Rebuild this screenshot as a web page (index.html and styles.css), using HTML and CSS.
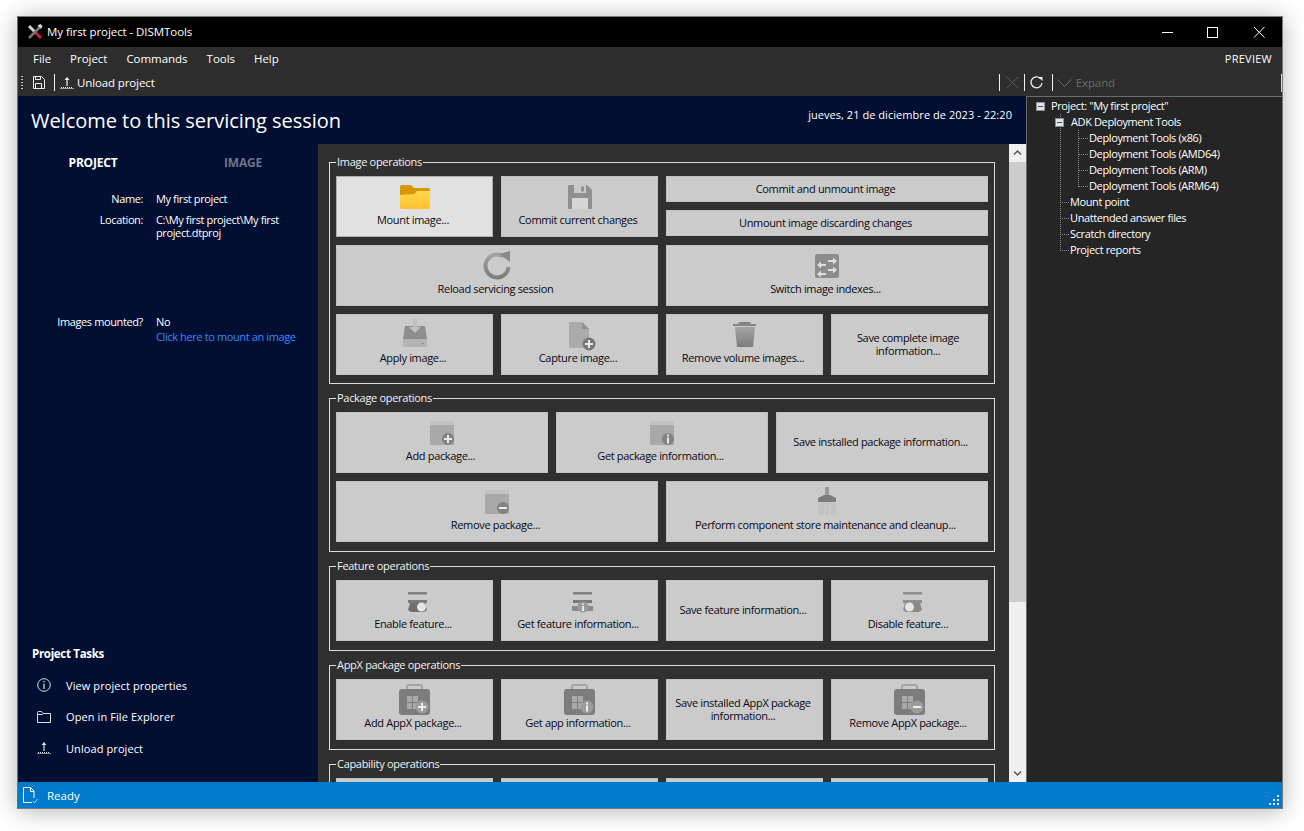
FILE: index.html
```html
<!DOCTYPE html>
<html>

<head>
  <meta charset="utf-8" />
  <title>My first project - DISMTools</title>
  <link rel="stylesheet" href="styles.css">
</head>

<body>
  <svg class="defs" width="0" height="0">
    <defs>
      <linearGradient id="g-down" x1="0" y1="0" x2="0" y2="1">
        <stop offset="0" stop-color="#a3a3a3" />
        <stop offset="1" stop-color="#7c7c7c" />
      </linearGradient>
      <linearGradient id="g-folder" x1="0" y1="0" x2="0" y2="1">
        <stop offset="0" stop-color="#ffd84d" />
        <stop offset="1" stop-color="#fdc02f" />
      </linearGradient>
    </defs>
    <symbol id="i-folder" viewBox="0 0 32 32">
      <path d="M1 6a2 2 0 0 1 2-2h9l3 3h14a2 2 0 0 1 2 2v6H1z" fill="#d79700" />
      <path d="M1 14l14-1 3-3h13v16a2 2 0 0 1-2 2H3a2 2 0 0 1-2-2z" fill="url(#g-folder)" />
    </symbol>
    <symbol id="i-save" viewBox="0 0 32 32">
      <path d="M4 5a1 1 0 0 1 1-1h18l5 5v18a1 1 0 0 1-1 1H5a1 1 0 0 1-1-1z" fill="#8f8f8f" />
      <rect x="10" y="4" width="12" height="8" fill="#c9c9c9" />
      <rect x="17" y="5.5" width="3" height="5" fill="#8f8f8f" />
      <rect x="8" y="17" width="16" height="11" fill="#d6d6d6" />
    </symbol>
    <symbol id="i-reload" viewBox="0 0 32 32">
      <path d="M22.5 6.5A11.5 11.5 0 1 0 27.5 17" fill="none" stroke="url(#g-down)" stroke-width="4" />
      <path d="M18 4l11-3v11z" fill="#8a8a8a" />
    </symbol>
    <symbol id="i-switch" viewBox="0 0 32 32">
      <rect x="4" y="4" width="24" height="24" rx="2" fill="#8c8c8c" />
      <path d="M17 10h5V7.5l4 3.5-4 3.5V12h-5zM15 14h-5v-2.5L6 15l4 3.5V16h5zM17 19h5v-2.5l4 3.5-4 3.5V21h-5zM15 23h-5v-2.5L6 24l4 3.5V25h5z" fill="#dedede" />
    </symbol>
    <symbol id="i-apply" viewBox="0 0 32 32">
      <path d="M6 7h20l2 13H4z" fill="#8e8e8e" />
      <path d="M14 0h4v8h4l-6 6-6-6h4z" fill="#c0c0c0" />
      <rect x="4" y="20" width="24" height="8" rx="1" fill="#b4b4b4" />
      <rect x="23" y="24" width="2" height="1" fill="#8a8a8a" />
    </symbol>
    <symbol id="i-capture" viewBox="0 0 32 32">
      <path d="M5 4a1 1 0 0 1 1-1h12l7 7v19H6a1 1 0 0 1-1-1z" fill="#ababab" />
      <path d="M18 3l7 7h-7z" fill="#8f8f8f" />
      <circle cx="25" cy="25" r="6.5" fill="#787878" />
      <path d="M24 21h2v3h3v2h-3v3h-2v-3h-3v-2h3z" fill="#e8e8e8" />
    </symbol>
    <symbol id="i-trash" viewBox="0 0 32 32">
      <path d="M10 3h11l1 2h5v2H4V5h5z" fill="#858585" />
      <path d="M6 8h20l-2 20H8z" fill="url(#g-down)" />
    </symbol>
    <symbol id="i-pkg-add" viewBox="0 0 32 32">
      <rect x="4" y="4" width="24" height="4" fill="#c3c3c3" />
      <rect x="4" y="8" width="24" height="20" fill="#a9a9a9" />
      <circle cx="22" cy="22" r="6" fill="#828282" />
      <path d="M21 18h2v3h3v2h-3v3h-2v-3h-3v-2h3z" fill="#e8e8e8" />
    </symbol>
    <symbol id="i-pkg-info" viewBox="0 0 32 32">
      <rect x="4" y="4" width="24" height="4" fill="#c3c3c3" />
      <rect x="4" y="8" width="24" height="20" fill="#a9a9a9" />
      <circle cx="22" cy="22" r="6" fill="#828282" />
      <path d="M21 17.5h2v2h-2zM21 20.5h2v6h-2z" fill="#e8e8e8" />
    </symbol>
    <symbol id="i-pkg-remove" viewBox="0 0 32 32">
      <rect x="4" y="4" width="24" height="4" fill="#c3c3c3" />
      <rect x="4" y="8" width="24" height="20" fill="#a9a9a9" />
      <circle cx="22" cy="22" r="6" fill="#828282" />
      <rect x="18" y="21" width="8" height="2" fill="#e8e8e8" />
    </symbol>
    <symbol id="i-brush" viewBox="0 0 32 32">
      <rect x="14" y="1" width="4" height="10" fill="#999" />
      <path d="M13 9h6l6 3v4H7v-4z" fill="#7c7c7c" />
      <path d="M7 17h7l-1 12H7zM15 17h3v12h-3zM19 17h6v12h-5z" fill="#c2c2c2" />
    </symbol>
    <symbol id="i-feat-on" viewBox="0 0 32 32">
      <rect x="9" y="7" width="19" height="2.5" fill="#808080" />
      <rect x="9" y="15" width="19" height="3" fill="#7a7a7a" />
      <path d="M11 18h15l2 7-3 2H12l-3-2z" fill="#6f6f6f" />
      <circle cx="22.5" cy="22" r="4.5" fill="#e6e6e6" />
    </symbol>
    <symbol id="i-feat-info" viewBox="0 0 32 32">
      <rect x="9" y="7" width="19" height="2.5" fill="#808080" />
      <rect x="9" y="15" width="19" height="3" fill="#7a7a7a" />
      <path d="M8 21h21v5H8z" fill="#8a8a8a" />
      <circle cx="19" cy="22" r="5.5" fill="#9a9a9a" />
      <path d="M18 18.5h2v1.500h-2zM18 21h2v5h-2z" fill="#e8e8e8" />
    </symbol>
    <symbol id="i-feat-off" viewBox="0 0 32 32">
      <rect x="9" y="7" width="19" height="2.5" fill="#8e8e8e" />
      <rect x="9" y="15" width="19" height="3" fill="#8e8e8e" />
      <path d="M11 18h15l2 7-3 2H12l-3-2z" fill="#8a8a8a" />
      <circle cx="15.5" cy="22" r="4.5" fill="#e6e6e6" />
    </symbol>
    <symbol id="i-bag" viewBox="0 0 32 32">
      <path d="M8 6V3a2 2 0 0 1 2-2h11a2 2 0 0 1 2 2v3" fill="none" stroke="#a3a3a3" stroke-width="2" />
      <rect x="0" y="5" width="31" height="26" rx="3" fill="#7d7d7d" />
      <path d="M8 12h5v6H8zM14 12h5v6h-5zM8 19h5v6H8zM14 19h5v6h-5z" fill="#a9a9a9" />
    </symbol>
    <symbol id="i-unload" viewBox="0 0 14 14">
      <path d="M7 1l2.500 3H7.600v6H6.400V4H4.500z" fill="currentColor" />
      <path d="M1 11.500h12" stroke="currentColor" stroke-dasharray="1 1" fill="none" />
      <path d="M0 12.500h14" stroke="currentColor" fill="none" opacity=".6" />
    </symbol>
  </svg>

  <div class="window">
    <div class="titlebar">
      <svg class="app-icon" width="16" height="16" viewBox="0 0 16 16">
        <path d="M2 2l5.500 5.500" stroke="#d0d0d0" stroke-width="3" />
        <path d="M8 8l6 6" stroke="#c8203c" stroke-width="3" />
        <path d="M14 2L2 14" stroke="#777" stroke-width="2.500" />
        <path d="M10.500 1.500l3-1.500 2 2-1.500 3z" fill="#d8d8d8" />
      </svg>
      <span class="title-text">My first project - DISMTools</span>
      <div class="winbtns">
        <svg class="winbtn" width="46" height="30" viewBox="0 0 46 30"><path d="M18 15.500h11" stroke="#fff" /></svg>
        <svg class="winbtn" width="46" height="30" viewBox="0 0 46 30"><rect x="17.500" y="10.500" width="10" height="10" fill="none" stroke="#fff" /></svg>
        <svg class="winbtn" width="46" height="30" viewBox="0 0 46 30"><path d="M18 10l10.500 10.500M28.500 10L18 20.500" stroke="#fff" /></svg>
      </div>
    </div>

    <div class="menubar">
      <span class="menu-item">File</span>
      <span class="menu-item">Project</span>
      <span class="menu-item">Commands</span>
      <span class="menu-item">Tools</span>
      <span class="menu-item">Help</span>
      <span class="menu-preview">PREVIEW</span>
    </div>

    <div class="toolbar">
      <span class="grip"></span>
      <svg class="tool-save" width="13" height="13" viewBox="0 0 13 13">
        <path d="M1.500.500h8l3 3v9h-11zM3.500.500v3h5v-3M3.500 12.500v-5h6v5" fill="none" stroke="#eee" />
      </svg>
      <span class="tool-sep"></span>
      <svg class="tool-unload" width="14" height="14"><use href="#i-unload" /></svg>
      <span class="tool-text">Unload project</span>
      <span class="tool-spacer"></span>
      <span class="tool-sep"></span>
      <svg class="tool-x" width="13" height="13" viewBox="0 0 13 13"><path d="M.500.500l12 12M12.500.500l-12 12" stroke="#5a5a5a" /></svg>
      <span class="tool-sep sep-b"></span>
      <svg class="tool-refresh" width="13" height="13" viewBox="0 0 13 13">
        <path d="M10.500 2.500A5.500 5.500 0 1 0 12 7" fill="none" stroke="#eee" stroke-width="1.300" />
        <path d="M8 1h4.500v4z" fill="#eee" />
      </svg>
      <span class="tool-sep"></span>
      <svg class="tool-chev" width="15" height="8" viewBox="0 0 15 8"><path d="M.500.500l7 7 7-7" fill="none" stroke="#6a6a6a" /></svg>
      <span class="tool-dim">Expand</span>
      <span class="tool-end"></span>
    </div>

    <div class="main">
      <div class="session">
        <div class="session-head">
          <h1>Welcome to this servicing session</h1>
          <span class="session-date">jueves, 21 de diciembre de 2023 - 22:20</span>
        </div>
        <div class="session-body">
          <div class="side">
            <div class="side-tabs">
              <span class="tab tab-on">PROJECT</span>
              <span class="tab">IMAGE</span>
            </div>
            <div class="info">
              <span class="info-key">Name:</span>
              <span>My first project</span>
              <span class="info-key">Location:</span>
              <span>C:\My first project\My first project.dtproj</span>
            </div>
            <div class="info info-mounted">
              <span class="info-key">Images mounted?</span>
              <span>No<a class="mount-link">Click here to mount an image</a></span>
            </div>
            <div class="tasks">
              <h2>Project Tasks</h2>
              <div class="task">
                <svg width="14" height="14" viewBox="0 0 14 14">
                  <circle cx="7" cy="7" r="6.300" fill="none" stroke="#ddd" />
                  <path d="M6.400 3h1.200v1.300H6.400zM6.400 5.500h1.200V11H6.400z" fill="#ddd" />
                </svg>
                <span>View project properties</span>
              </div>
              <div class="task">
                <svg width="14" height="14" viewBox="0 0 14 14">
                  <path d="M.500 2.500a1 1 0 0 1 1-1h3l1.500 2h7.500v9h-13zM.500 4.500h5l1-1" fill="none" stroke="#ddd" />
                </svg>
                <span>Open in File Explorer</span>
              </div>
              <div class="task">
                <svg width="14" height="14"><use href="#i-unload" /></svg>
                <span>Unload project</span>
              </div>
            </div>
          </div>

          <div class="ops">
            <fieldset class="group group-first">
              <legend>Image operations</legend>
              <div class="grid grid-4">
                <button class="btn btn-default"><svg><use href="#i-folder" /></svg>Mount image...</button>
                <button class="btn"><svg><use href="#i-save" /></svg>Commit current changes</button>
                <div class="btn-pair">
                  <button class="btn btn-plain">Commit and unmount image</button>
                  <button class="btn btn-plain">Unmount image discarding changes</button>
                </div>
                <button class="btn span-2"><svg><use href="#i-reload" /></svg>Reload servicing session</button>
                <button class="btn span-2"><svg><use href="#i-switch" /></svg>Switch image indexes...</button>
                <button class="btn"><svg><use href="#i-apply" /></svg>Apply image...</button>
                <button class="btn"><svg><use href="#i-capture" /></svg>Capture image...</button>
                <button class="btn"><svg><use href="#i-trash" /></svg>Remove volume images...</button>
                <button class="btn btn-plain">Save complete image information...</button>
              </div>
            </fieldset>

            <fieldset class="group">
              <legend>Package operations</legend>
              <div class="grid grid-3">
                <button class="btn"><svg><use href="#i-pkg-add" /></svg>Add package...</button>
                <button class="btn"><svg><use href="#i-pkg-info" /></svg>Get package information...</button>
                <button class="btn btn-plain">Save installed package information...</button>
              </div>
              <div class="grid grid-2 grid-next">
                <button class="btn"><svg><use href="#i-pkg-remove" /></svg>Remove package...</button>
                <button class="btn"><svg><use href="#i-brush" /></svg>Perform component store maintenance and cleanup...</button>
              </div>
            </fieldset>

            <fieldset class="group">
              <legend>Feature operations</legend>
              <div class="grid grid-4">
                <button class="btn"><svg><use href="#i-feat-on" /></svg>Enable feature...</button>
                <button class="btn"><svg><use href="#i-feat-info" /></svg>Get feature information...</button>
                <button class="btn btn-plain">Save feature information...</button>
                <button class="btn"><svg><use href="#i-feat-off" /></svg>Disable feature...</button>
              </div>
            </fieldset>

            <fieldset class="group">
              <legend>AppX package operations</legend>
              <div class="grid grid-4">
                <button class="btn"><svg viewBox="0 0 32 32"><use href="#i-bag" width="32" height="32" /><circle cx="23" cy="23" r="6.500" fill="#9c9c9c" /><path d="M22 19h2v3h3v2h-3v3h-2v-3h-3v-2h3z" fill="#eee" /></svg>Add AppX package...</button>
                <button class="btn"><svg viewBox="0 0 32 32"><use href="#i-bag" width="32" height="32" /><circle cx="23" cy="23" r="6.500" fill="#9c9c9c" /><path d="M22 18.500h2v2h-2zM22 21.500h2v6h-2z" fill="#eee" /></svg>Get app information...</button>
                <button class="btn btn-plain">Save installed AppX package information...</button>
                <button class="btn"><svg viewBox="0 0 32 32"><use href="#i-bag" width="32" height="32" /><circle cx="23" cy="23" r="6.500" fill="#9c9c9c" /><rect x="19" y="22" width="8" height="2" fill="#eee" /></svg>Remove AppX package...</button>
              </div>
            </fieldset>

            <fieldset class="group">
              <legend>Capability operations</legend>
              <div class="grid grid-4">
                <button class="btn"></button>
                <button class="btn"></button>
                <button class="btn"></button>
                <button class="btn"></button>
              </div>
            </fieldset>
          </div>

          <div class="scrollbar">
            <svg class="scroll-arrow" width="17" height="17" viewBox="0 0 17 17"><path d="M5 10.500l3.500-3.500 3.500 3.500" fill="none" stroke="#555" stroke-width="1.500" /></svg>
            <div class="scroll-track"><div class="scroll-thumb"></div></div>
            <svg class="scroll-arrow" width="17" height="17" viewBox="0 0 17 17"><path d="M5 6.500l3.500 3.500 3.500-3.500" fill="none" stroke="#555" stroke-width="1.500" /></svg>
          </div>
        </div>
      </div>

      <div class="tree">
        <ul class="tree-root">
          <li>
            <span class="tree-box"></span>Project: "My first project"
            <ul class="tree-sub">
              <li class="tree-adk">
                <span class="tree-box"></span>ADK Deployment Tools
                <ul class="tree-sub">
                  <li>Deployment Tools (x86)</li>
                  <li>Deployment Tools (AMD64)</li>
                  <li>Deployment Tools (ARM)</li>
                  <li>Deployment Tools (ARM64)</li>
                </ul>
              </li>
              <li>Mount point</li>
              <li>Unattended answer files</li>
              <li>Scratch directory</li>
              <li>Project reports</li>
            </ul>
          </li>
        </ul>
      </div>
    </div>

    <div class="statusbar">
      <svg class="status-icon" width="15" height="17" viewBox="0 0 15 17">
        <path d="M9 15.500H.500v-15h7l3.500 3.500v7" fill="none" stroke="#fff" />
        <path d="M7.500.500v4h3.500" fill="none" stroke="#fff" />
        <path d="M10 14l1.500 2 3-4" fill="none" stroke="#cfe6f7" stroke-width=".8" />
      </svg>
      <span>Ready</span>
      <svg class="status-grip" width="12" height="12" viewBox="0 0 12 12">
        <path d="M9 1h2v2H9zM5 5h2v2H5zM9 5h2v2H9zM1 9h2v2H1zM5 9h2v2H5zM9 9h2v2H9z" fill="#e8e8e8" />
      </svg>
    </div>
  </div>
</body>

</html>
```

FILE: styles.css
```css
* {
  box-sizing: border-box;
}

html,
body {
  height: 100%;
}

body {
  margin: 0;
  overflow: hidden;
  background-color: #fff;
  font-family: "Open Sans", "Noto Sans", sans-serif;
  font-size: 11px;
  line-height: 13px;
  letter-spacing: -0.38px;
  color: #fff;
}

.defs {
  position: absolute;
}

.window {
  display: flex;
  flex-direction: column;
  width: 1266px;
  height: 793px;
  margin: 16px 0 0 17px;
  border: 1px solid #7a7a7a;
  border-left-color: #6f6f6f;
  box-shadow: 0 2px 22px rgba(0, 0, 0, 0.3);
}

/* title bar */
.titlebar {
  display: flex;
  align-items: center;
  flex: none;
  height: 30px;
  padding-bottom: 1px;
  background-color: #000;
}

.app-icon {
  margin-left: 9px;
}

.title-text {
  margin-left: 4px;
  font-size: 11.5px;
  letter-spacing: -0.07px;
}

.winbtns {
  display: flex;
  margin-left: auto;
  margin-bottom: -1px;
}

.winbtn {
  display: block;
}

/* menu */
.menubar {
  display: flex;
  align-items: center;
  flex: none;
  height: 24px;
  padding: 0 0 2px 15px;
  background-color: #2d2d2d;
  font-size: 11.5px;
  letter-spacing: -0.03px;
}

.menu-item {
  margin-right: 19px;
}

.menu-preview {
  margin-left: auto;
  margin-right: 10px;
  font-size: 11px;
  letter-spacing: 0.25px;
}

/* toolbar */
.toolbar {
  display: flex;
  align-items: center;
  flex: none;
  height: 25px;
  padding: 0 0 2px 3px;
  background-color: #2d2d2d;
  font-size: 11.5px;
  letter-spacing: -0.12px;
}

.grip {
  width: 2px;
  height: 14px;
  background-image: linear-gradient(#ccc 50%, transparent 50%);
  background-size: 2px 3px;
}

.tool-save {
  margin-left: 9px;
}

.tool-sep {
  width: 1px;
  height: 17px;
  margin-left: 9px;
  background-color: #f0f0f0;
}

.tool-unload {
  margin-left: 5px;
  color: #eee;
}

.tool-text {
  margin-left: 3px;
}

.tool-spacer {
  flex: 1;
}

.tool-x {
  margin-left: 6px;
}

.sep-b {
  margin-left: 5px;
}

.tool-refresh {
  margin-left: 5px;
}

.tool-chev {
  margin-left: 4px;
}

.tool-dim {
  margin-left: 4px;
  color: #6b6b6b;
}

.tool-end {
  width: 1px;
  height: 18px;
  margin-left: 166px;
  background-color: #d8d8d8;
}

/* main area */
.main {
  display: flex;
  flex: 1;
  min-height: 0;
}

.session {
  display: flex;
  flex-direction: column;
  flex: none;
  width: 1008px;
  background-color: #020f33;
}

.session-head {
  display: flex;
  align-items: flex-start;
  justify-content: space-between;
  flex: none;
  height: 48px;
  padding: 11px 14px 0 13px;
}

.session-head h1 {
  margin: 0;
  font-size: 20px;
  font-weight: 400;
  line-height: 28px;
  letter-spacing: -0.03px;
}

.session-date {
  margin-top: 1px;
  letter-spacing: 0.05px;
}

.session-body {
  display: flex;
  flex: 1;
  min-height: 0;
}

/* left side */
.side {
  display: flex;
  flex-direction: column;
  flex: none;
  width: 300px;
}

.side-tabs {
  display: grid;
  grid-template-columns: 1fr 1fr;
  padding-top: 12px;
  text-align: center;
  font-size: 12px;
  font-weight: 700;
  line-height: 13px;
  letter-spacing: -0.2px;
}

.tab {
  color: #6d7487;
}

.tab-on {
  color: #fff;
}

.info {
  display: grid;
  grid-template-columns: 125px 145px;
  column-gap: 13px;
  row-gap: 8px;
  margin-top: 23px;
}

.info-key {
  text-align: right;
}

.info-mounted {
  margin-top: 76px;
}

.mount-link {
  display: block;
  margin-top: 2px;
  white-space: nowrap;
  color: #3b86ff;
}

.tasks {
  margin-top: auto;
  padding: 0 0 27px 14px;
}

.tasks h2 {
  margin: 0 0 16px;
  font-size: 11.5px;
  font-weight: 700;
  line-height: 16px;
  letter-spacing: -0.3px;
}

.task {
  display: flex;
  align-items: center;
  height: 14px;
  margin: 0 0 17.500px 5px;
  letter-spacing: 0.09px;
}

.task:last-child {
  margin-bottom: 0;
}

.task svg {
  flex: none;
  margin-right: 15px;
  color: #ddd;
}

/* operations */
.ops {
  flex: none;
  width: 691px;
  padding: 11px 0 0 11px;
  overflow: hidden;
  background-color: #303030;
}

.group {
  width: 666px;
  min-width: 0;
  margin: 0 0 7px;
  padding: 7px 6px 9px;
  border: 1px solid #dcdcdc;
}

.group-first {
  padding-bottom: 8px;
}

.group legend {
  padding: 0 1px;
  line-height: 14px;
  letter-spacing: -0.3px;
  color: #f2f2f2;
}

.grid {
  display: grid;
  grid-auto-rows: 61px;
  gap: 8px;
}

.grid-4 {
  grid-template-columns: repeat(4, 157px);
}

.grid-3 {
  grid-template-columns: repeat(3, 212px);
}

.grid-2 {
  grid-template-columns: repeat(2, 322px);
}

.grid-next {
  margin-top: 8px;
}

.span-2 {
  grid-column: span 2;
}

.btn-pair {
  display: grid;
  grid-column: span 2;
  grid-template-rows: 26px 26px;
  row-gap: 8px;
}

.btn {
  display: flex;
  flex-direction: column;
  align-items: center;
  padding: 4px 5px 0 2px;
  border: 1px solid #c1c1c1;
  background-color: #cbcbcb;
  font: inherit;
  line-height: 14px;
  letter-spacing: -0.34px;
  color: #0a0a14;
}

.btn svg {
  flex: none;
  width: 32px;
  height: 32px;
  margin-right: -3px;
}

.btn-plain {
  justify-content: center;
  padding: 0 6px 2px 3px;
  line-height: 13px;
}

.btn-default {
  border-color: #adadad;
  background-color: #e1e1e1;
}

/* scrollbar */
.scrollbar {
  display: flex;
  flex-direction: column;
  flex: none;
  width: 17px;
  background-color: #f0f0f0;
}

.scroll-arrow {
  display: block;
  flex: none;
}

.scroll-track {
  flex: 1;
}

.scroll-thumb {
  height: 440px;
  margin-top: 1px;
  background-color: #cdcdcd;
}

/* tree */
.tree {
  flex: 1;
  padding-top: 1px;
  border-top: 1px solid #6b6b6b;
  border-left: 1px solid #6b6b6b;
  background-color: #252525;
}

.tree ul {
  margin: 0;
  padding: 0;
  list-style: none;
}

.tree li {
  position: relative;
  line-height: 16px;
}

.tree-root > li {
  padding-left: 24px;
}

.tree-sub {
  position: relative;
}

.tree-root > li > .tree-sub {
  padding-left: 19px;
}

.tree-adk > .tree-sub {
  margin-left: -1px;
  padding-left: 19px;
}

.tree-sub::before {
  content: "";
  position: absolute;
  left: 9px;
  top: 0;
  bottom: 7px;
  border-left: 1px dotted #8a8a8a;
}

.tree-adk > .tree-sub::before {
  left: 8px;
}

.tree-sub > li::before {
  content: "";
  position: absolute;
  left: -10px;
  top: 8px;
  width: 9px;
  border-top: 1px dotted #8a8a8a;
}

.tree-adk {
  padding-left: 1px;
}

.tree-adk::before {
  display: none;
}

.tree-box {
  position: absolute;
  left: -15px;
  top: 4px;
  width: 9px;
  height: 9px;
  border: 1px solid #8d8d8d;
  background: linear-gradient(#2b4b93, #2b4b93) center / 5px 1px no-repeat, #e4e4e4;
}

.tree-root > li > .tree-box {
  left: 9px;
}

.tree-adk > .tree-box {
  left: -15px;
}

/* status bar */
.statusbar {
  display: flex;
  align-items: center;
  flex: none;
  height: 26px;
  padding-left: 5px;
  background-color: #007acc;
  font-size: 11.5px;
  letter-spacing: 0;
}

.status-icon {
  margin-right: 9px;
}

.status-grip {
  margin: 9px 2px 0 auto;
}
```
